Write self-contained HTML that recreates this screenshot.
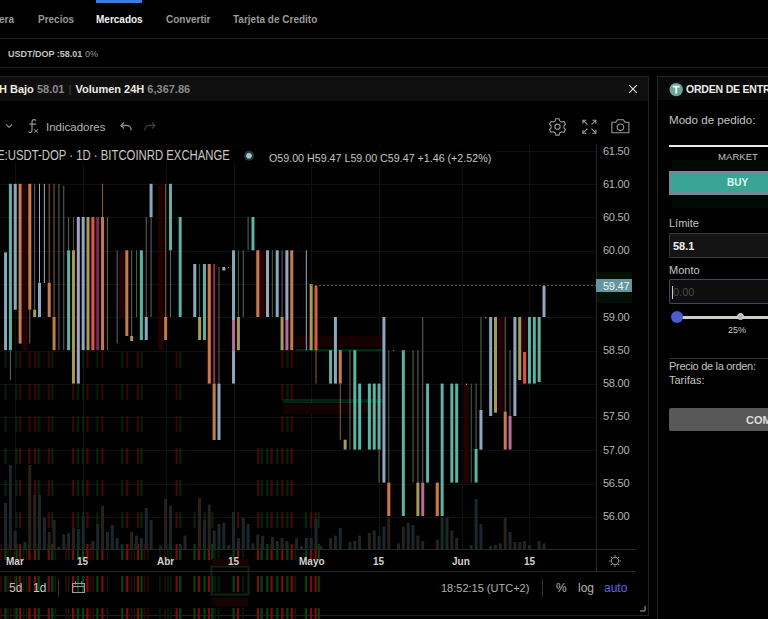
<!DOCTYPE html>
<html><head><meta charset="utf-8">
<style>
*{margin:0;padding:0;box-sizing:border-box}
html,body{width:768px;height:619px;overflow:hidden;background:#000;font-family:"Liberation Sans",sans-serif}
.a{position:absolute;white-space:nowrap}
.nav{font-size:10px;font-weight:bold;color:#9a9a9a;top:14px;line-height:12px}
.pl{font-size:11px;color:#b4b4b4;left:603px;line-height:12px;letter-spacing:-0.25px;font-family:"Liberation Sans",sans-serif}
.tl{font-size:10px;font-weight:bold;color:#d0d0d0;top:556px;line-height:12px}
.rp{font-size:11px;color:#c4c4c4;line-height:13px}
</style></head><body>
<!-- top nav -->
<div class="a" style="left:96px;top:0;width:46px;height:3px;background:#3d7fd8"></div>
<div class="a nav" style="left:-1px">era</div>
<div class="a nav" style="left:38px">Precios</div>
<div class="a nav" style="left:96px;color:#f4f4f4">Mercados</div>
<div class="a nav" style="left:166px">Convertir</div>
<div class="a nav" style="left:233px">Tarjeta de Credito</div>
<div class="a" style="left:0;top:38px;width:768px;height:1px;background:#202020"></div>
<div class="a" style="left:8px;top:48px;font-size:9px;font-weight:bold;color:#c4c4c4;line-height:12px">USDT/DOP :58.01 <span style="color:#9a9a9a;font-weight:normal">0%</span></div>
<div class="a" style="left:0;top:67px;width:768px;height:1px;background:#202020"></div>

<!-- chart panel -->
<div class="a" style="left:-2px;top:76px;width:651px;height:540px;border:1px solid #222;background:#010101"></div>
<div class="a" style="left:0;top:77px;width:648px;height:24px;background:#0f0f0f"></div>
<div class="a" style="left:-1px;top:81px;font-size:11px;font-weight:bold;color:#ecece4;line-height:16px">H Bajo <span style="color:#8a8a8a">58.01</span> <span style="color:#4a4a4a;font-weight:normal;margin:0 1px">|</span> Volumen 24H <span style="color:#8a8a8a">6,367.86</span></div>
<svg class="a" style="left:627px;top:83px" width="12" height="12"><path d="M2.2,2.2 L9.8,9.8 M9.8,2.2 L2.2,9.8" stroke="#d8d8d8" stroke-width="1.2"/></svg>

<svg width="768" height="619" style="position:absolute;left:0;top:0">
<rect x="15" y="144" width="1" height="405" fill="#101010"/>
<rect x="83" y="144" width="1" height="405" fill="#101010"/>
<rect x="166" y="144" width="1" height="405" fill="#101010"/>
<rect x="234" y="144" width="1" height="405" fill="#101010"/>
<rect x="311" y="144" width="1" height="405" fill="#101010"/>
<rect x="379" y="144" width="1" height="405" fill="#101010"/>
<rect x="462" y="144" width="1" height="405" fill="#101010"/>
<rect x="529" y="144" width="1" height="405" fill="#101010"/>
<rect x="0" y="151" width="596" height="1" fill="#101010"/>
<rect x="0" y="184" width="596" height="1" fill="#101010"/>
<rect x="0" y="217" width="596" height="1" fill="#101010"/>
<rect x="0" y="251" width="596" height="1" fill="#101010"/>
<rect x="0" y="284" width="596" height="1" fill="#101010"/>
<rect x="0" y="317" width="596" height="1" fill="#101010"/>
<rect x="0" y="351" width="596" height="1" fill="#101010"/>
<rect x="0" y="384" width="596" height="1" fill="#101010"/>
<rect x="0" y="417" width="596" height="1" fill="#101010"/>
<rect x="0" y="450" width="596" height="1" fill="#101010"/>
<rect x="0" y="484" width="596" height="1" fill="#101010"/>
<rect x="0" y="517" width="596" height="1" fill="#101010"/>
<rect x="296" y="336" width="87" height="11" fill="#160101"/>
<rect x="283" y="404" width="100" height="10" fill="#140101"/>
<rect x="4.40" y="352" width="2.2" height="16" fill="#0a400e" fill-opacity="0.45"/>
<rect x="15.40" y="352" width="2.2" height="16" fill="#0a400e" fill-opacity="0.45"/>
<rect x="18.90" y="352" width="2.2" height="16" fill="#7a0c0c" fill-opacity="0.45"/>
<rect x="28.30" y="352" width="2.2" height="16" fill="#7a0c0c" fill-opacity="0.45"/>
<rect x="33.90" y="352" width="2.2" height="16" fill="#7a0c0c" fill-opacity="0.45"/>
<rect x="37.60" y="352" width="2.2" height="16" fill="#0a400e" fill-opacity="0.45"/>
<rect x="47.60" y="352" width="2.2" height="16" fill="#7a0c0c" fill-opacity="0.45"/>
<rect x="51.20" y="352" width="2.2" height="16" fill="#0a400e" fill-opacity="0.45"/>
<rect x="71.90" y="352" width="2.2" height="16" fill="#7a0c0c" fill-opacity="0.45"/>
<rect x="76.90" y="352" width="2.2" height="16" fill="#0a400e" fill-opacity="0.45"/>
<rect x="81.90" y="352" width="2.2" height="16" fill="#0a400e" fill-opacity="0.45"/>
<rect x="86.30" y="352" width="2.2" height="16" fill="#7a0c0c" fill-opacity="0.45"/>
<rect x="96.30" y="352" width="2.2" height="16" fill="#0a400e" fill-opacity="0.45"/>
<rect x="101.30" y="352" width="2.2" height="16" fill="#7a0c0c" fill-opacity="0.45"/>
<rect x="121.10" y="352" width="2.2" height="16" fill="#0a400e" fill-opacity="0.45"/>
<rect x="126.10" y="352" width="2.2" height="16" fill="#7a0c0c" fill-opacity="0.45"/>
<rect x="136.90" y="352" width="2.2" height="16" fill="#7a0c0c" fill-opacity="0.45"/>
<rect x="140.40" y="352" width="2.2" height="16" fill="#0a400e" fill-opacity="0.45"/>
<rect x="175.50" y="352" width="2.2" height="16" fill="#7a0c0c" fill-opacity="0.45"/>
<rect x="179.10" y="352" width="2.2" height="16" fill="#0a400e" fill-opacity="0.45"/>
<rect x="281.20" y="352" width="2.2" height="16" fill="#7a0c0c" fill-opacity="0.45"/>
<rect x="286.30" y="352" width="2.2" height="16" fill="#0a400e" fill-opacity="0.45"/>
<rect x="290.60" y="352" width="2.2" height="16" fill="#7a0c0c" fill-opacity="0.45"/>
<rect x="4.40" y="384" width="2.2" height="16" fill="#0a400e" fill-opacity="0.45"/>
<rect x="15.40" y="384" width="2.2" height="16" fill="#0a400e" fill-opacity="0.45"/>
<rect x="18.90" y="384" width="2.2" height="16" fill="#7a0c0c" fill-opacity="0.45"/>
<rect x="28.30" y="384" width="2.2" height="16" fill="#7a0c0c" fill-opacity="0.45"/>
<rect x="33.90" y="384" width="2.2" height="16" fill="#7a0c0c" fill-opacity="0.45"/>
<rect x="37.60" y="384" width="2.2" height="16" fill="#0a400e" fill-opacity="0.45"/>
<rect x="47.60" y="384" width="2.2" height="16" fill="#7a0c0c" fill-opacity="0.45"/>
<rect x="51.20" y="384" width="2.2" height="16" fill="#0a400e" fill-opacity="0.45"/>
<rect x="71.90" y="384" width="2.2" height="16" fill="#7a0c0c" fill-opacity="0.45"/>
<rect x="76.90" y="384" width="2.2" height="16" fill="#0a400e" fill-opacity="0.45"/>
<rect x="81.90" y="384" width="2.2" height="16" fill="#0a400e" fill-opacity="0.45"/>
<rect x="86.30" y="384" width="2.2" height="16" fill="#7a0c0c" fill-opacity="0.45"/>
<rect x="96.30" y="384" width="2.2" height="16" fill="#0a400e" fill-opacity="0.45"/>
<rect x="101.30" y="384" width="2.2" height="16" fill="#7a0c0c" fill-opacity="0.45"/>
<rect x="121.10" y="384" width="2.2" height="16" fill="#0a400e" fill-opacity="0.45"/>
<rect x="126.10" y="384" width="2.2" height="16" fill="#7a0c0c" fill-opacity="0.45"/>
<rect x="136.90" y="384" width="2.2" height="16" fill="#7a0c0c" fill-opacity="0.45"/>
<rect x="140.40" y="384" width="2.2" height="16" fill="#0a400e" fill-opacity="0.45"/>
<rect x="175.50" y="384" width="2.2" height="16" fill="#7a0c0c" fill-opacity="0.45"/>
<rect x="179.10" y="384" width="2.2" height="16" fill="#0a400e" fill-opacity="0.45"/>
<rect x="281.20" y="384" width="2.2" height="16" fill="#7a0c0c" fill-opacity="0.45"/>
<rect x="286.30" y="384" width="2.2" height="16" fill="#0a400e" fill-opacity="0.45"/>
<rect x="290.60" y="384" width="2.2" height="16" fill="#7a0c0c" fill-opacity="0.45"/>
<rect x="4.40" y="416" width="2.2" height="16" fill="#0a400e" fill-opacity="0.45"/>
<rect x="15.40" y="416" width="2.2" height="16" fill="#0a400e" fill-opacity="0.45"/>
<rect x="18.90" y="416" width="2.2" height="16" fill="#7a0c0c" fill-opacity="0.45"/>
<rect x="28.30" y="416" width="2.2" height="16" fill="#7a0c0c" fill-opacity="0.45"/>
<rect x="33.90" y="416" width="2.2" height="16" fill="#7a0c0c" fill-opacity="0.45"/>
<rect x="37.60" y="416" width="2.2" height="16" fill="#0a400e" fill-opacity="0.45"/>
<rect x="47.60" y="416" width="2.2" height="16" fill="#7a0c0c" fill-opacity="0.45"/>
<rect x="51.20" y="416" width="2.2" height="16" fill="#0a400e" fill-opacity="0.45"/>
<rect x="71.90" y="416" width="2.2" height="16" fill="#7a0c0c" fill-opacity="0.45"/>
<rect x="76.90" y="416" width="2.2" height="16" fill="#0a400e" fill-opacity="0.45"/>
<rect x="81.90" y="416" width="2.2" height="16" fill="#0a400e" fill-opacity="0.45"/>
<rect x="86.30" y="416" width="2.2" height="16" fill="#7a0c0c" fill-opacity="0.45"/>
<rect x="96.30" y="416" width="2.2" height="16" fill="#0a400e" fill-opacity="0.45"/>
<rect x="101.30" y="416" width="2.2" height="16" fill="#7a0c0c" fill-opacity="0.45"/>
<rect x="121.10" y="416" width="2.2" height="16" fill="#0a400e" fill-opacity="0.45"/>
<rect x="126.10" y="416" width="2.2" height="16" fill="#7a0c0c" fill-opacity="0.45"/>
<rect x="136.90" y="416" width="2.2" height="16" fill="#7a0c0c" fill-opacity="0.45"/>
<rect x="140.40" y="416" width="2.2" height="16" fill="#0a400e" fill-opacity="0.45"/>
<rect x="175.50" y="416" width="2.2" height="16" fill="#7a0c0c" fill-opacity="0.45"/>
<rect x="179.10" y="416" width="2.2" height="16" fill="#0a400e" fill-opacity="0.45"/>
<rect x="281.20" y="416" width="2.2" height="16" fill="#7a0c0c" fill-opacity="0.45"/>
<rect x="286.30" y="416" width="2.2" height="16" fill="#0a400e" fill-opacity="0.45"/>
<rect x="290.60" y="416" width="2.2" height="16" fill="#7a0c0c" fill-opacity="0.45"/>
<rect x="4.40" y="448" width="2.2" height="16" fill="#0a400e" fill-opacity="0.55"/>
<rect x="15.40" y="448" width="2.2" height="16" fill="#0a400e" fill-opacity="0.55"/>
<rect x="18.90" y="448" width="2.2" height="16" fill="#7a0c0c" fill-opacity="0.55"/>
<rect x="28.30" y="448" width="2.2" height="16" fill="#7a0c0c" fill-opacity="0.55"/>
<rect x="33.90" y="448" width="2.2" height="16" fill="#7a0c0c" fill-opacity="0.55"/>
<rect x="37.60" y="448" width="2.2" height="16" fill="#0a400e" fill-opacity="0.55"/>
<rect x="47.60" y="448" width="2.2" height="16" fill="#7a0c0c" fill-opacity="0.55"/>
<rect x="51.20" y="448" width="2.2" height="16" fill="#0a400e" fill-opacity="0.55"/>
<rect x="71.90" y="448" width="2.2" height="16" fill="#7a0c0c" fill-opacity="0.55"/>
<rect x="76.90" y="448" width="2.2" height="16" fill="#0a400e" fill-opacity="0.55"/>
<rect x="81.90" y="448" width="2.2" height="16" fill="#0a400e" fill-opacity="0.55"/>
<rect x="86.30" y="448" width="2.2" height="16" fill="#7a0c0c" fill-opacity="0.55"/>
<rect x="96.30" y="448" width="2.2" height="16" fill="#0a400e" fill-opacity="0.55"/>
<rect x="101.30" y="448" width="2.2" height="16" fill="#7a0c0c" fill-opacity="0.55"/>
<rect x="121.10" y="448" width="2.2" height="16" fill="#0a400e" fill-opacity="0.55"/>
<rect x="126.10" y="448" width="2.2" height="16" fill="#7a0c0c" fill-opacity="0.55"/>
<rect x="136.90" y="448" width="2.2" height="16" fill="#7a0c0c" fill-opacity="0.55"/>
<rect x="140.40" y="448" width="2.2" height="16" fill="#0a400e" fill-opacity="0.55"/>
<rect x="175.50" y="448" width="2.2" height="16" fill="#7a0c0c" fill-opacity="0.55"/>
<rect x="179.10" y="448" width="2.2" height="16" fill="#0a400e" fill-opacity="0.55"/>
<rect x="256.90" y="448" width="2.2" height="16" fill="#7a0c0c" fill-opacity="0.55"/>
<rect x="260.50" y="448" width="2.2" height="16" fill="#0a400e" fill-opacity="0.55"/>
<rect x="266.20" y="448" width="2.2" height="16" fill="#0a400e" fill-opacity="0.55"/>
<rect x="270.50" y="448" width="2.2" height="16" fill="#7a0c0c" fill-opacity="0.55"/>
<rect x="276.20" y="448" width="2.2" height="16" fill="#0a400e" fill-opacity="0.55"/>
<rect x="281.20" y="448" width="2.2" height="16" fill="#7a0c0c" fill-opacity="0.55"/>
<rect x="286.30" y="448" width="2.2" height="16" fill="#0a400e" fill-opacity="0.55"/>
<rect x="290.60" y="448" width="2.2" height="16" fill="#7a0c0c" fill-opacity="0.55"/>
<rect x="4.40" y="480" width="2.2" height="16" fill="#0a400e" fill-opacity="0.55"/>
<rect x="15.40" y="480" width="2.2" height="16" fill="#0a400e" fill-opacity="0.55"/>
<rect x="18.90" y="480" width="2.2" height="16" fill="#7a0c0c" fill-opacity="0.55"/>
<rect x="28.30" y="480" width="2.2" height="16" fill="#7a0c0c" fill-opacity="0.55"/>
<rect x="33.90" y="480" width="2.2" height="16" fill="#7a0c0c" fill-opacity="0.55"/>
<rect x="37.60" y="480" width="2.2" height="16" fill="#0a400e" fill-opacity="0.55"/>
<rect x="47.60" y="480" width="2.2" height="16" fill="#7a0c0c" fill-opacity="0.55"/>
<rect x="51.20" y="480" width="2.2" height="16" fill="#0a400e" fill-opacity="0.55"/>
<rect x="71.90" y="480" width="2.2" height="16" fill="#7a0c0c" fill-opacity="0.55"/>
<rect x="76.90" y="480" width="2.2" height="16" fill="#0a400e" fill-opacity="0.55"/>
<rect x="81.90" y="480" width="2.2" height="16" fill="#0a400e" fill-opacity="0.55"/>
<rect x="86.30" y="480" width="2.2" height="16" fill="#7a0c0c" fill-opacity="0.55"/>
<rect x="96.30" y="480" width="2.2" height="16" fill="#0a400e" fill-opacity="0.55"/>
<rect x="101.30" y="480" width="2.2" height="16" fill="#7a0c0c" fill-opacity="0.55"/>
<rect x="121.10" y="480" width="2.2" height="16" fill="#0a400e" fill-opacity="0.55"/>
<rect x="126.10" y="480" width="2.2" height="16" fill="#7a0c0c" fill-opacity="0.55"/>
<rect x="136.90" y="480" width="2.2" height="16" fill="#7a0c0c" fill-opacity="0.55"/>
<rect x="140.40" y="480" width="2.2" height="16" fill="#0a400e" fill-opacity="0.55"/>
<rect x="175.50" y="480" width="2.2" height="16" fill="#7a0c0c" fill-opacity="0.55"/>
<rect x="179.10" y="480" width="2.2" height="16" fill="#0a400e" fill-opacity="0.55"/>
<rect x="256.90" y="480" width="2.2" height="16" fill="#7a0c0c" fill-opacity="0.55"/>
<rect x="260.50" y="480" width="2.2" height="16" fill="#0a400e" fill-opacity="0.55"/>
<rect x="266.20" y="480" width="2.2" height="16" fill="#0a400e" fill-opacity="0.55"/>
<rect x="270.50" y="480" width="2.2" height="16" fill="#7a0c0c" fill-opacity="0.55"/>
<rect x="276.20" y="480" width="2.2" height="16" fill="#0a400e" fill-opacity="0.55"/>
<rect x="281.20" y="480" width="2.2" height="16" fill="#7a0c0c" fill-opacity="0.55"/>
<rect x="286.30" y="480" width="2.2" height="16" fill="#0a400e" fill-opacity="0.55"/>
<rect x="290.60" y="480" width="2.2" height="16" fill="#7a0c0c" fill-opacity="0.55"/>
<rect x="4.40" y="512" width="2.2" height="16" fill="#0a400e" fill-opacity="0.55"/>
<rect x="15.40" y="512" width="2.2" height="16" fill="#0a400e" fill-opacity="0.55"/>
<rect x="18.90" y="512" width="2.2" height="16" fill="#7a0c0c" fill-opacity="0.55"/>
<rect x="28.30" y="512" width="2.2" height="16" fill="#7a0c0c" fill-opacity="0.55"/>
<rect x="33.90" y="512" width="2.2" height="16" fill="#7a0c0c" fill-opacity="0.55"/>
<rect x="37.60" y="512" width="2.2" height="16" fill="#0a400e" fill-opacity="0.55"/>
<rect x="47.60" y="512" width="2.2" height="16" fill="#7a0c0c" fill-opacity="0.55"/>
<rect x="51.20" y="512" width="2.2" height="16" fill="#0a400e" fill-opacity="0.55"/>
<rect x="71.90" y="512" width="2.2" height="16" fill="#7a0c0c" fill-opacity="0.55"/>
<rect x="76.90" y="512" width="2.2" height="16" fill="#0a400e" fill-opacity="0.55"/>
<rect x="81.90" y="512" width="2.2" height="16" fill="#0a400e" fill-opacity="0.55"/>
<rect x="86.30" y="512" width="2.2" height="16" fill="#7a0c0c" fill-opacity="0.55"/>
<rect x="96.30" y="512" width="2.2" height="16" fill="#0a400e" fill-opacity="0.55"/>
<rect x="101.30" y="512" width="2.2" height="16" fill="#7a0c0c" fill-opacity="0.55"/>
<rect x="121.10" y="512" width="2.2" height="16" fill="#0a400e" fill-opacity="0.55"/>
<rect x="126.10" y="512" width="2.2" height="16" fill="#7a0c0c" fill-opacity="0.55"/>
<rect x="136.90" y="512" width="2.2" height="16" fill="#7a0c0c" fill-opacity="0.55"/>
<rect x="140.40" y="512" width="2.2" height="16" fill="#0a400e" fill-opacity="0.55"/>
<rect x="175.50" y="512" width="2.2" height="16" fill="#7a0c0c" fill-opacity="0.55"/>
<rect x="179.10" y="512" width="2.2" height="16" fill="#0a400e" fill-opacity="0.55"/>
<rect x="193.40" y="512" width="2.2" height="16" fill="#0a400e" fill-opacity="0.55"/>
<rect x="197.70" y="512" width="2.2" height="16" fill="#7a0c0c" fill-opacity="0.55"/>
<rect x="203.50" y="512" width="2.2" height="16" fill="#0a400e" fill-opacity="0.55"/>
<rect x="207.80" y="512" width="2.2" height="16" fill="#7a0c0c" fill-opacity="0.55"/>
<rect x="211.30" y="512" width="2.2" height="16" fill="#0a400e" fill-opacity="0.55"/>
<rect x="232.50" y="512" width="2.2" height="16" fill="#0a400e" fill-opacity="0.55"/>
<rect x="236.90" y="512" width="2.2" height="16" fill="#7a0c0c" fill-opacity="0.55"/>
<rect x="256.90" y="512" width="2.2" height="16" fill="#7a0c0c" fill-opacity="0.55"/>
<rect x="260.50" y="512" width="2.2" height="16" fill="#0a400e" fill-opacity="0.55"/>
<rect x="266.20" y="512" width="2.2" height="16" fill="#0a400e" fill-opacity="0.55"/>
<rect x="270.50" y="512" width="2.2" height="16" fill="#7a0c0c" fill-opacity="0.55"/>
<rect x="276.20" y="512" width="2.2" height="16" fill="#0a400e" fill-opacity="0.55"/>
<rect x="281.20" y="512" width="2.2" height="16" fill="#7a0c0c" fill-opacity="0.55"/>
<rect x="286.30" y="512" width="2.2" height="16" fill="#0a400e" fill-opacity="0.55"/>
<rect x="290.60" y="512" width="2.2" height="16" fill="#7a0c0c" fill-opacity="0.55"/>
<rect x="304.90" y="512" width="2.2" height="16" fill="#0a400e" fill-opacity="0.55"/>
<rect x="309.90" y="512" width="2.2" height="16" fill="#7a0c0c" fill-opacity="0.55"/>
<rect x="314.50" y="512" width="2.2" height="16" fill="#7a0c0c" fill-opacity="0.55"/>
<rect x="317.65" y="512" width="2.2" height="16" fill="#0a400e" fill-opacity="0.55"/>
<rect x="0.20" y="544" width="1.6" height="16" fill="#360606" fill-opacity="1.0"/>
<rect x="4.40" y="544" width="2.2" height="16" fill="#0a400e" fill-opacity="1.0"/>
<rect x="7.20" y="544" width="1.6" height="16" fill="#360606" fill-opacity="1.0"/>
<rect x="9.90" y="544" width="1.6" height="16" fill="#052005" fill-opacity="1.0"/>
<rect x="13.50" y="544" width="1.6" height="16" fill="#360606" fill-opacity="1.0"/>
<rect x="15.40" y="544" width="2.2" height="16" fill="#0a400e" fill-opacity="1.0"/>
<rect x="18.90" y="544" width="2.2" height="16" fill="#7a0c0c" fill-opacity="1.0"/>
<rect x="22.80" y="544" width="1.6" height="16" fill="#052005" fill-opacity="1.0"/>
<rect x="25.70" y="544" width="1.6" height="16" fill="#052005" fill-opacity="1.0"/>
<rect x="28.30" y="544" width="2.2" height="16" fill="#7a0c0c" fill-opacity="1.0"/>
<rect x="33.90" y="544" width="2.2" height="16" fill="#7a0c0c" fill-opacity="1.0"/>
<rect x="37.60" y="544" width="2.2" height="16" fill="#0a400e" fill-opacity="1.0"/>
<rect x="47.60" y="544" width="2.2" height="16" fill="#7a0c0c" fill-opacity="1.0"/>
<rect x="51.20" y="544" width="2.2" height="16" fill="#0a400e" fill-opacity="1.0"/>
<rect x="54.20" y="544" width="1.6" height="16" fill="#052005" fill-opacity="1.0"/>
<rect x="65.20" y="544" width="1.6" height="16" fill="#360606" fill-opacity="1.0"/>
<rect x="68.00" y="544" width="1.6" height="16" fill="#052005" fill-opacity="1.0"/>
<rect x="71.90" y="544" width="2.2" height="16" fill="#7a0c0c" fill-opacity="1.0"/>
<rect x="76.90" y="544" width="2.2" height="16" fill="#0a400e" fill-opacity="1.0"/>
<rect x="81.90" y="544" width="2.2" height="16" fill="#0a400e" fill-opacity="1.0"/>
<rect x="86.30" y="544" width="2.2" height="16" fill="#7a0c0c" fill-opacity="1.0"/>
<rect x="89.50" y="544" width="1.6" height="16" fill="#360606" fill-opacity="1.0"/>
<rect x="92.20" y="544" width="1.6" height="16" fill="#360606" fill-opacity="1.0"/>
<rect x="96.30" y="544" width="2.2" height="16" fill="#0a400e" fill-opacity="1.0"/>
<rect x="101.30" y="544" width="2.2" height="16" fill="#7a0c0c" fill-opacity="1.0"/>
<rect x="106.60" y="544" width="1.6" height="16" fill="#052005" fill-opacity="1.0"/>
<rect x="121.10" y="544" width="2.2" height="16" fill="#0a400e" fill-opacity="1.0"/>
<rect x="126.10" y="544" width="2.2" height="16" fill="#7a0c0c" fill-opacity="1.0"/>
<rect x="130.70" y="544" width="1.6" height="16" fill="#360606" fill-opacity="1.0"/>
<rect x="133.60" y="544" width="1.6" height="16" fill="#052005" fill-opacity="1.0"/>
<rect x="136.90" y="544" width="2.2" height="16" fill="#7a0c0c" fill-opacity="1.0"/>
<rect x="140.40" y="544" width="2.2" height="16" fill="#0a400e" fill-opacity="1.0"/>
<rect x="143.60" y="544" width="1.6" height="16" fill="#360606" fill-opacity="1.0"/>
<rect x="147.20" y="544" width="1.6" height="16" fill="#360606" fill-opacity="1.0"/>
<rect x="159.20" y="544" width="1.6" height="16" fill="#052005" fill-opacity="1.0"/>
<rect x="164.20" y="544" width="1.6" height="16" fill="#360606" fill-opacity="1.0"/>
<rect x="167.20" y="544" width="1.6" height="16" fill="#052005" fill-opacity="1.0"/>
<rect x="170.20" y="544" width="1.6" height="16" fill="#052005" fill-opacity="1.0"/>
<rect x="175.50" y="544" width="2.2" height="16" fill="#7a0c0c" fill-opacity="1.0"/>
<rect x="179.10" y="544" width="2.2" height="16" fill="#0a400e" fill-opacity="1.0"/>
<rect x="193.40" y="544" width="2.2" height="16" fill="#0a400e" fill-opacity="1.0"/>
<rect x="197.70" y="544" width="2.2" height="16" fill="#7a0c0c" fill-opacity="1.0"/>
<rect x="203.50" y="544" width="2.2" height="16" fill="#0a400e" fill-opacity="1.0"/>
<rect x="207.80" y="544" width="2.2" height="16" fill="#7a0c0c" fill-opacity="1.0"/>
<rect x="211.30" y="544" width="2.2" height="16" fill="#0a400e" fill-opacity="1.0"/>
<rect x="214.20" y="544" width="1.6" height="16" fill="#052005" fill-opacity="1.0"/>
<rect x="217.80" y="544" width="1.6" height="16" fill="#052005" fill-opacity="1.0"/>
<rect x="232.50" y="544" width="2.2" height="16" fill="#0a400e" fill-opacity="1.0"/>
<rect x="236.90" y="544" width="2.2" height="16" fill="#7a0c0c" fill-opacity="1.0"/>
<rect x="242.20" y="544" width="1.6" height="16" fill="#052005" fill-opacity="1.0"/>
<rect x="256.90" y="544" width="2.2" height="16" fill="#7a0c0c" fill-opacity="1.0"/>
<rect x="260.50" y="544" width="2.2" height="16" fill="#0a400e" fill-opacity="1.0"/>
<rect x="266.20" y="544" width="2.2" height="16" fill="#0a400e" fill-opacity="1.0"/>
<rect x="270.50" y="544" width="2.2" height="16" fill="#7a0c0c" fill-opacity="1.0"/>
<rect x="276.20" y="544" width="2.2" height="16" fill="#0a400e" fill-opacity="1.0"/>
<rect x="281.20" y="544" width="2.2" height="16" fill="#7a0c0c" fill-opacity="1.0"/>
<rect x="286.30" y="544" width="2.2" height="16" fill="#0a400e" fill-opacity="1.0"/>
<rect x="290.60" y="544" width="2.2" height="16" fill="#7a0c0c" fill-opacity="1.0"/>
<rect x="294.40" y="544" width="1.6" height="16" fill="#052005" fill-opacity="1.0"/>
<rect x="304.90" y="544" width="2.2" height="16" fill="#0a400e" fill-opacity="1.0"/>
<rect x="309.90" y="544" width="2.2" height="16" fill="#7a0c0c" fill-opacity="1.0"/>
<rect x="314.50" y="544" width="2.2" height="16" fill="#7a0c0c" fill-opacity="1.0"/>
<rect x="317.65" y="544" width="2.2" height="16" fill="#0a400e" fill-opacity="1.0"/>
<rect x="0.20" y="576" width="1.6" height="16" fill="#360606" fill-opacity="1.0"/>
<rect x="4.40" y="576" width="2.2" height="16" fill="#0a400e" fill-opacity="1.0"/>
<rect x="7.20" y="576" width="1.6" height="16" fill="#360606" fill-opacity="1.0"/>
<rect x="9.90" y="576" width="1.6" height="16" fill="#052005" fill-opacity="1.0"/>
<rect x="13.50" y="576" width="1.6" height="16" fill="#360606" fill-opacity="1.0"/>
<rect x="15.40" y="576" width="2.2" height="16" fill="#0a400e" fill-opacity="1.0"/>
<rect x="18.90" y="576" width="2.2" height="16" fill="#7a0c0c" fill-opacity="1.0"/>
<rect x="22.80" y="576" width="1.6" height="16" fill="#052005" fill-opacity="1.0"/>
<rect x="25.70" y="576" width="1.6" height="16" fill="#052005" fill-opacity="1.0"/>
<rect x="28.30" y="576" width="2.2" height="16" fill="#7a0c0c" fill-opacity="1.0"/>
<rect x="33.90" y="576" width="2.2" height="16" fill="#7a0c0c" fill-opacity="1.0"/>
<rect x="37.60" y="576" width="2.2" height="16" fill="#0a400e" fill-opacity="1.0"/>
<rect x="47.60" y="576" width="2.2" height="16" fill="#7a0c0c" fill-opacity="1.0"/>
<rect x="51.20" y="576" width="2.2" height="16" fill="#0a400e" fill-opacity="1.0"/>
<rect x="54.20" y="576" width="1.6" height="16" fill="#052005" fill-opacity="1.0"/>
<rect x="65.20" y="576" width="1.6" height="16" fill="#360606" fill-opacity="1.0"/>
<rect x="68.00" y="576" width="1.6" height="16" fill="#052005" fill-opacity="1.0"/>
<rect x="71.90" y="576" width="2.2" height="16" fill="#7a0c0c" fill-opacity="1.0"/>
<rect x="76.90" y="576" width="2.2" height="16" fill="#0a400e" fill-opacity="1.0"/>
<rect x="81.90" y="576" width="2.2" height="16" fill="#0a400e" fill-opacity="1.0"/>
<rect x="86.30" y="576" width="2.2" height="16" fill="#7a0c0c" fill-opacity="1.0"/>
<rect x="89.50" y="576" width="1.6" height="16" fill="#360606" fill-opacity="1.0"/>
<rect x="92.20" y="576" width="1.6" height="16" fill="#360606" fill-opacity="1.0"/>
<rect x="96.30" y="576" width="2.2" height="16" fill="#0a400e" fill-opacity="1.0"/>
<rect x="101.30" y="576" width="2.2" height="16" fill="#7a0c0c" fill-opacity="1.0"/>
<rect x="106.60" y="576" width="1.6" height="16" fill="#052005" fill-opacity="1.0"/>
<rect x="121.10" y="576" width="2.2" height="16" fill="#0a400e" fill-opacity="1.0"/>
<rect x="126.10" y="576" width="2.2" height="16" fill="#7a0c0c" fill-opacity="1.0"/>
<rect x="130.70" y="576" width="1.6" height="16" fill="#360606" fill-opacity="1.0"/>
<rect x="133.60" y="576" width="1.6" height="16" fill="#052005" fill-opacity="1.0"/>
<rect x="136.90" y="576" width="2.2" height="16" fill="#7a0c0c" fill-opacity="1.0"/>
<rect x="140.40" y="576" width="2.2" height="16" fill="#0a400e" fill-opacity="1.0"/>
<rect x="143.60" y="576" width="1.6" height="16" fill="#360606" fill-opacity="1.0"/>
<rect x="147.20" y="576" width="1.6" height="16" fill="#360606" fill-opacity="1.0"/>
<rect x="159.20" y="576" width="1.6" height="16" fill="#052005" fill-opacity="1.0"/>
<rect x="164.20" y="576" width="1.6" height="16" fill="#360606" fill-opacity="1.0"/>
<rect x="167.20" y="576" width="1.6" height="16" fill="#052005" fill-opacity="1.0"/>
<rect x="170.20" y="576" width="1.6" height="16" fill="#052005" fill-opacity="1.0"/>
<rect x="175.50" y="576" width="2.2" height="16" fill="#7a0c0c" fill-opacity="1.0"/>
<rect x="179.10" y="576" width="2.2" height="16" fill="#0a400e" fill-opacity="1.0"/>
<rect x="193.40" y="576" width="2.2" height="16" fill="#0a400e" fill-opacity="1.0"/>
<rect x="197.70" y="576" width="2.2" height="16" fill="#7a0c0c" fill-opacity="1.0"/>
<rect x="203.50" y="576" width="2.2" height="16" fill="#0a400e" fill-opacity="1.0"/>
<rect x="207.80" y="576" width="2.2" height="16" fill="#7a0c0c" fill-opacity="1.0"/>
<rect x="211.30" y="576" width="2.2" height="16" fill="#0a400e" fill-opacity="1.0"/>
<rect x="214.20" y="576" width="1.6" height="16" fill="#052005" fill-opacity="1.0"/>
<rect x="217.80" y="576" width="1.6" height="16" fill="#052005" fill-opacity="1.0"/>
<rect x="232.50" y="576" width="2.2" height="16" fill="#0a400e" fill-opacity="1.0"/>
<rect x="236.90" y="576" width="2.2" height="16" fill="#7a0c0c" fill-opacity="1.0"/>
<rect x="242.20" y="576" width="1.6" height="16" fill="#052005" fill-opacity="1.0"/>
<rect x="256.90" y="576" width="2.2" height="16" fill="#7a0c0c" fill-opacity="1.0"/>
<rect x="260.50" y="576" width="2.2" height="16" fill="#0a400e" fill-opacity="1.0"/>
<rect x="266.20" y="576" width="2.2" height="16" fill="#0a400e" fill-opacity="1.0"/>
<rect x="270.50" y="576" width="2.2" height="16" fill="#7a0c0c" fill-opacity="1.0"/>
<rect x="276.20" y="576" width="2.2" height="16" fill="#0a400e" fill-opacity="1.0"/>
<rect x="281.20" y="576" width="2.2" height="16" fill="#7a0c0c" fill-opacity="1.0"/>
<rect x="286.30" y="576" width="2.2" height="16" fill="#0a400e" fill-opacity="1.0"/>
<rect x="290.60" y="576" width="2.2" height="16" fill="#7a0c0c" fill-opacity="1.0"/>
<rect x="294.40" y="576" width="1.6" height="16" fill="#052005" fill-opacity="1.0"/>
<rect x="304.90" y="576" width="2.2" height="16" fill="#0a400e" fill-opacity="1.0"/>
<rect x="309.90" y="576" width="2.2" height="16" fill="#7a0c0c" fill-opacity="1.0"/>
<rect x="314.50" y="576" width="2.2" height="16" fill="#7a0c0c" fill-opacity="1.0"/>
<rect x="317.65" y="576" width="2.2" height="16" fill="#0a400e" fill-opacity="1.0"/>
<rect x="0.20" y="608" width="1.6" height="16" fill="#360606" fill-opacity="1.0"/>
<rect x="4.40" y="608" width="2.2" height="16" fill="#0a400e" fill-opacity="1.0"/>
<rect x="7.20" y="608" width="1.6" height="16" fill="#360606" fill-opacity="1.0"/>
<rect x="9.90" y="608" width="1.6" height="16" fill="#052005" fill-opacity="1.0"/>
<rect x="13.50" y="608" width="1.6" height="16" fill="#360606" fill-opacity="1.0"/>
<rect x="15.40" y="608" width="2.2" height="16" fill="#0a400e" fill-opacity="1.0"/>
<rect x="18.90" y="608" width="2.2" height="16" fill="#7a0c0c" fill-opacity="1.0"/>
<rect x="22.80" y="608" width="1.6" height="16" fill="#052005" fill-opacity="1.0"/>
<rect x="25.70" y="608" width="1.6" height="16" fill="#052005" fill-opacity="1.0"/>
<rect x="28.30" y="608" width="2.2" height="16" fill="#7a0c0c" fill-opacity="1.0"/>
<rect x="33.90" y="608" width="2.2" height="16" fill="#7a0c0c" fill-opacity="1.0"/>
<rect x="37.60" y="608" width="2.2" height="16" fill="#0a400e" fill-opacity="1.0"/>
<rect x="47.60" y="608" width="2.2" height="16" fill="#7a0c0c" fill-opacity="1.0"/>
<rect x="51.20" y="608" width="2.2" height="16" fill="#0a400e" fill-opacity="1.0"/>
<rect x="54.20" y="608" width="1.6" height="16" fill="#052005" fill-opacity="1.0"/>
<rect x="65.20" y="608" width="1.6" height="16" fill="#360606" fill-opacity="1.0"/>
<rect x="68.00" y="608" width="1.6" height="16" fill="#052005" fill-opacity="1.0"/>
<rect x="71.90" y="608" width="2.2" height="16" fill="#7a0c0c" fill-opacity="1.0"/>
<rect x="76.90" y="608" width="2.2" height="16" fill="#0a400e" fill-opacity="1.0"/>
<rect x="81.90" y="608" width="2.2" height="16" fill="#0a400e" fill-opacity="1.0"/>
<rect x="86.30" y="608" width="2.2" height="16" fill="#7a0c0c" fill-opacity="1.0"/>
<rect x="89.50" y="608" width="1.6" height="16" fill="#360606" fill-opacity="1.0"/>
<rect x="92.20" y="608" width="1.6" height="16" fill="#360606" fill-opacity="1.0"/>
<rect x="96.30" y="608" width="2.2" height="16" fill="#0a400e" fill-opacity="1.0"/>
<rect x="101.30" y="608" width="2.2" height="16" fill="#7a0c0c" fill-opacity="1.0"/>
<rect x="106.60" y="608" width="1.6" height="16" fill="#052005" fill-opacity="1.0"/>
<rect x="121.10" y="608" width="2.2" height="16" fill="#0a400e" fill-opacity="1.0"/>
<rect x="126.10" y="608" width="2.2" height="16" fill="#7a0c0c" fill-opacity="1.0"/>
<rect x="130.70" y="608" width="1.6" height="16" fill="#360606" fill-opacity="1.0"/>
<rect x="133.60" y="608" width="1.6" height="16" fill="#052005" fill-opacity="1.0"/>
<rect x="136.90" y="608" width="2.2" height="16" fill="#7a0c0c" fill-opacity="1.0"/>
<rect x="140.40" y="608" width="2.2" height="16" fill="#0a400e" fill-opacity="1.0"/>
<rect x="143.60" y="608" width="1.6" height="16" fill="#360606" fill-opacity="1.0"/>
<rect x="147.20" y="608" width="1.6" height="16" fill="#360606" fill-opacity="1.0"/>
<rect x="159.20" y="608" width="1.6" height="16" fill="#052005" fill-opacity="1.0"/>
<rect x="164.20" y="608" width="1.6" height="16" fill="#360606" fill-opacity="1.0"/>
<rect x="167.20" y="608" width="1.6" height="16" fill="#052005" fill-opacity="1.0"/>
<rect x="170.20" y="608" width="1.6" height="16" fill="#052005" fill-opacity="1.0"/>
<rect x="175.50" y="608" width="2.2" height="16" fill="#7a0c0c" fill-opacity="1.0"/>
<rect x="179.10" y="608" width="2.2" height="16" fill="#0a400e" fill-opacity="1.0"/>
<rect x="193.40" y="608" width="2.2" height="16" fill="#0a400e" fill-opacity="1.0"/>
<rect x="197.70" y="608" width="2.2" height="16" fill="#7a0c0c" fill-opacity="1.0"/>
<rect x="203.50" y="608" width="2.2" height="16" fill="#0a400e" fill-opacity="1.0"/>
<rect x="207.80" y="608" width="2.2" height="16" fill="#7a0c0c" fill-opacity="1.0"/>
<rect x="211.30" y="608" width="2.2" height="16" fill="#0a400e" fill-opacity="1.0"/>
<rect x="214.20" y="608" width="1.6" height="16" fill="#052005" fill-opacity="1.0"/>
<rect x="217.80" y="608" width="1.6" height="16" fill="#052005" fill-opacity="1.0"/>
<rect x="232.50" y="608" width="2.2" height="16" fill="#0a400e" fill-opacity="1.0"/>
<rect x="236.90" y="608" width="2.2" height="16" fill="#7a0c0c" fill-opacity="1.0"/>
<rect x="242.20" y="608" width="1.6" height="16" fill="#052005" fill-opacity="1.0"/>
<rect x="256.90" y="608" width="2.2" height="16" fill="#7a0c0c" fill-opacity="1.0"/>
<rect x="260.50" y="608" width="2.2" height="16" fill="#0a400e" fill-opacity="1.0"/>
<rect x="266.20" y="608" width="2.2" height="16" fill="#0a400e" fill-opacity="1.0"/>
<rect x="270.50" y="608" width="2.2" height="16" fill="#7a0c0c" fill-opacity="1.0"/>
<rect x="276.20" y="608" width="2.2" height="16" fill="#0a400e" fill-opacity="1.0"/>
<rect x="281.20" y="608" width="2.2" height="16" fill="#7a0c0c" fill-opacity="1.0"/>
<rect x="286.30" y="608" width="2.2" height="16" fill="#0a400e" fill-opacity="1.0"/>
<rect x="290.60" y="608" width="2.2" height="16" fill="#7a0c0c" fill-opacity="1.0"/>
<rect x="294.40" y="608" width="1.6" height="16" fill="#052005" fill-opacity="1.0"/>
<rect x="304.90" y="608" width="2.2" height="16" fill="#0a400e" fill-opacity="1.0"/>
<rect x="309.90" y="608" width="2.2" height="16" fill="#7a0c0c" fill-opacity="1.0"/>
<rect x="314.50" y="608" width="2.2" height="16" fill="#7a0c0c" fill-opacity="1.0"/>
<rect x="317.65" y="608" width="2.2" height="16" fill="#0a400e" fill-opacity="1.0"/>
<rect x="4.05" y="503.0" width="3" height="46.0" fill="#1c272c"/>
<rect x="8.90" y="465.0" width="3" height="84.0" fill="#1c272c"/>
<rect x="13.75" y="530.5" width="3" height="18.5" fill="#1c272c"/>
<rect x="23.45" y="542.0" width="3" height="7.0" fill="#162c2c"/>
<rect x="28.30" y="465.0" width="3" height="84.0" fill="#29211b"/>
<rect x="33.15" y="495.0" width="3" height="54.0" fill="#29211b"/>
<rect x="38.00" y="495.0" width="3" height="54.0" fill="#1c272c"/>
<rect x="42.86" y="517.5" width="3" height="31.5" fill="#1c272c"/>
<rect x="47.71" y="531.8" width="3" height="17.2" fill="#29211b"/>
<rect x="52.56" y="520.0" width="3" height="29.0" fill="#29211b"/>
<rect x="57.41" y="547.0" width="3" height="2.0" fill="#1c272c"/>
<rect x="62.26" y="534.4" width="3" height="14.6" fill="#1c272c"/>
<rect x="67.11" y="533.0" width="3" height="16.0" fill="#1c272c"/>
<rect x="71.96" y="528.0" width="3" height="21.0" fill="#29211b"/>
<rect x="76.81" y="529.0" width="3" height="20.0" fill="#1c272c"/>
<rect x="81.66" y="516.0" width="3" height="33.0" fill="#1c272c"/>
<rect x="91.37" y="541.0" width="3" height="8.0" fill="#1c272c"/>
<rect x="96.22" y="524.0" width="3" height="25.0" fill="#1c272c"/>
<rect x="101.07" y="505.8" width="3" height="43.2" fill="#29211b"/>
<rect x="105.92" y="531.8" width="3" height="17.2" fill="#1c272c"/>
<rect x="110.77" y="525.0" width="3" height="24.0" fill="#1c272c"/>
<rect x="115.62" y="538.0" width="3" height="11.0" fill="#1c272c"/>
<rect x="120.47" y="544.8" width="3" height="4.2" fill="#162c2c"/>
<rect x="130.17" y="531.8" width="3" height="17.2" fill="#29211b"/>
<rect x="135.03" y="535.7" width="3" height="13.3" fill="#1c272c"/>
<rect x="139.88" y="538.0" width="3" height="11.0" fill="#1c272c"/>
<rect x="144.73" y="508.0" width="3" height="41.0" fill="#1c272c"/>
<rect x="149.58" y="520.0" width="3" height="29.0" fill="#1c272c"/>
<rect x="159.28" y="546.0" width="3" height="3.0" fill="#1c272c"/>
<rect x="164.13" y="499.0" width="3" height="50.0" fill="#29211b"/>
<rect x="168.98" y="505.8" width="3" height="43.2" fill="#1c272c"/>
<rect x="178.68" y="545.0" width="3" height="4.0" fill="#1c272c"/>
<rect x="183.53" y="535.7" width="3" height="13.3" fill="#1c272c"/>
<rect x="198.09" y="498.0" width="3" height="51.0" fill="#29211b"/>
<rect x="202.94" y="520.0" width="3" height="29.0" fill="#1c272c"/>
<rect x="207.79" y="504.5" width="3" height="44.5" fill="#29211b"/>
<rect x="212.64" y="530.5" width="3" height="18.5" fill="#1c272c"/>
<rect x="217.49" y="524.0" width="3" height="25.0" fill="#1c272c"/>
<rect x="222.34" y="522.7" width="3" height="26.3" fill="#1c272c"/>
<rect x="227.19" y="545.0" width="3" height="4.0" fill="#1c272c"/>
<rect x="232.04" y="512.0" width="3" height="37.0" fill="#1c272c"/>
<rect x="236.90" y="538.0" width="3" height="11.0" fill="#1c272c"/>
<rect x="241.75" y="517.5" width="3" height="31.5" fill="#1c272c"/>
<rect x="246.60" y="524.0" width="3" height="25.0" fill="#1c272c"/>
<rect x="251.45" y="543.5" width="3" height="5.5" fill="#1c272c"/>
<rect x="256.30" y="534.4" width="3" height="14.6" fill="#29211b"/>
<rect x="261.15" y="535.7" width="3" height="13.3" fill="#1c272c"/>
<rect x="270.85" y="537.0" width="3" height="12.0" fill="#1c272c"/>
<rect x="275.70" y="541.0" width="3" height="8.0" fill="#1c272c"/>
<rect x="280.56" y="538.0" width="3" height="11.0" fill="#29211b"/>
<rect x="285.41" y="541.0" width="3" height="8.0" fill="#1c272c"/>
<rect x="295.11" y="538.0" width="3" height="11.0" fill="#29211b"/>
<rect x="299.96" y="546.0" width="3" height="3.0" fill="#1c272c"/>
<rect x="304.81" y="538.0" width="3" height="11.0" fill="#1c272c"/>
<rect x="309.66" y="538.0" width="3" height="11.0" fill="#1c272c"/>
<rect x="314.51" y="518.8" width="3" height="30.2" fill="#1c272c"/>
<rect x="319.36" y="546.0" width="3" height="3.0" fill="#1c272c"/>
<rect x="329.06" y="538.0" width="3" height="11.0" fill="#29211b"/>
<rect x="333.92" y="535.7" width="3" height="13.3" fill="#1c272c"/>
<rect x="338.77" y="528.0" width="3" height="21.0" fill="#1c272c"/>
<rect x="348.47" y="542.0" width="3" height="7.0" fill="#1c272c"/>
<rect x="353.32" y="541.0" width="3" height="8.0" fill="#1c272c"/>
<rect x="358.17" y="535.7" width="3" height="13.3" fill="#1c272c"/>
<rect x="367.87" y="533.0" width="3" height="16.0" fill="#29211b"/>
<rect x="372.72" y="530.5" width="3" height="18.5" fill="#1c272c"/>
<rect x="377.57" y="535.7" width="3" height="13.3" fill="#1c272c"/>
<rect x="382.43" y="526.6" width="3" height="22.4" fill="#1c272c"/>
<rect x="387.28" y="517.5" width="3" height="31.5" fill="#29211b"/>
<rect x="396.98" y="543.5" width="3" height="5.5" fill="#1c272c"/>
<rect x="401.83" y="526.6" width="3" height="22.4" fill="#29211b"/>
<rect x="406.68" y="522.7" width="3" height="26.3" fill="#1c272c"/>
<rect x="411.53" y="525.0" width="3" height="24.0" fill="#1c272c"/>
<rect x="416.38" y="535.7" width="3" height="13.3" fill="#29211b"/>
<rect x="421.23" y="541.0" width="3" height="8.0" fill="#1c272c"/>
<rect x="435.79" y="539.6" width="3" height="9.4" fill="#29211b"/>
<rect x="440.64" y="517.5" width="3" height="31.5" fill="#162c2c"/>
<rect x="445.49" y="517.5" width="3" height="31.5" fill="#162c2c"/>
<rect x="450.34" y="530.5" width="3" height="18.5" fill="#29211b"/>
<rect x="455.19" y="538.0" width="3" height="11.0" fill="#1c272c"/>
<rect x="469.74" y="545.0" width="3" height="4.0" fill="#1c272c"/>
<rect x="474.59" y="499.0" width="3" height="50.0" fill="#162c2c"/>
<rect x="479.45" y="524.0" width="3" height="25.0" fill="#1c272c"/>
<rect x="489.15" y="546.0" width="3" height="3.0" fill="#1c272c"/>
<rect x="494.00" y="545.0" width="3" height="4.0" fill="#1c272c"/>
<rect x="498.85" y="543.5" width="3" height="5.5" fill="#1c272c"/>
<rect x="503.70" y="517.5" width="3" height="31.5" fill="#29211b"/>
<rect x="508.55" y="531.8" width="3" height="17.2" fill="#1c272c"/>
<rect x="513.40" y="542.0" width="3" height="7.0" fill="#1c272c"/>
<rect x="518.25" y="542.0" width="3" height="7.0" fill="#1c272c"/>
<rect x="523.11" y="541.0" width="3" height="8.0" fill="#29211b"/>
<rect x="527.96" y="545.0" width="3" height="4.0" fill="#1c272c"/>
<rect x="537.66" y="541.0" width="3" height="8.0" fill="#1c272c"/>
<rect x="542.51" y="543.5" width="3" height="5.5" fill="#1c272c"/>
<rect x="4.05" y="252.4" width="3" height="97.8" fill="#8ea6be"/>
<rect x="8.90" y="183.8" width="3" height="166.4" fill="#5eb2a4"/>
<rect x="9.90" y="350.2" width="1" height="29.8" fill="#646464"/>
<rect x="13.75" y="183.8" width="3" height="125.9" fill="#8ea6be"/>
<rect x="18.60" y="183.8" width="3" height="159.8" fill="#c47c4c"/>
<rect x="22.45" y="183.8" width="5" height="166.4" fill="#240202"/>
<rect x="28.30" y="183.8" width="3" height="125.9" fill="#c47c4c"/>
<rect x="29.30" y="309.7" width="1" height="33.9" fill="#8a6048"/>
<rect x="34.15" y="183.8" width="1" height="125.9" fill="#646464"/>
<rect x="33.15" y="309.7" width="3" height="7.3" fill="#a49a5c"/>
<rect x="39.00" y="183.8" width="1" height="98.9" fill="#a4a2c4"/>
<rect x="38.00" y="282.7" width="3" height="34.3" fill="#8ea6be"/>
<rect x="43.86" y="183.8" width="1" height="99.2" fill="#a8a8a8"/>
<rect x="48.71" y="183.8" width="1" height="98.9" fill="#8a6048"/>
<rect x="47.71" y="282.7" width="3" height="34.3" fill="#c47c4c"/>
<rect x="53.56" y="183.8" width="1" height="133.2" fill="#8a6048"/>
<rect x="52.56" y="317.0" width="3" height="33.2" fill="#c47c4c"/>
<rect x="58.41" y="183.8" width="1" height="166.4" fill="#646464"/>
<rect x="63.26" y="185.7" width="1" height="164.5" fill="#646464"/>
<rect x="68.11" y="217.0" width="1" height="33.3" fill="#646464"/>
<rect x="67.11" y="250.3" width="3" height="99.9" fill="#5eb2a4"/>
<rect x="72.96" y="217.0" width="1" height="33.3" fill="#406a40"/>
<rect x="71.96" y="250.3" width="3" height="133.3" fill="#a49a5c"/>
<rect x="76.81" y="217.0" width="3" height="166.6" fill="#a4a2c4"/>
<rect x="81.66" y="217.0" width="3" height="133.2" fill="#8ea6be"/>
<rect x="86.52" y="217.0" width="3" height="133.2" fill="#a49a5c"/>
<rect x="90.37" y="217.0" width="5" height="133.2" fill="#240202"/>
<rect x="91.37" y="217.0" width="3" height="133.2" fill="#d85a44"/>
<rect x="96.22" y="217.0" width="3" height="133.2" fill="#7a2c50"/>
<rect x="102.07" y="183.8" width="1" height="33.2" fill="#8a6048"/>
<rect x="101.07" y="217.0" width="3" height="133.2" fill="#c47c4c"/>
<rect x="106.92" y="217.0" width="1" height="133.2" fill="#646464"/>
<rect x="116.62" y="250.3" width="1" height="93.3" fill="#646464"/>
<rect x="119.47" y="250.3" width="5" height="66.7" fill="#240202"/>
<rect x="125.32" y="250.3" width="3" height="85.7" fill="#c47c4c"/>
<rect x="131.17" y="250.3" width="1" height="85.7" fill="#646464"/>
<rect x="130.17" y="336.0" width="3" height="5.0" fill="#a49a5c"/>
<rect x="136.03" y="250.3" width="1" height="66.7" fill="#406a40"/>
<rect x="139.88" y="250.3" width="3" height="89.7" fill="#5eb2a4"/>
<rect x="145.73" y="217.0" width="1" height="100.0" fill="#646464"/>
<rect x="144.73" y="317.0" width="3" height="23.0" fill="#8ea6be"/>
<rect x="149.58" y="183.8" width="3" height="33.2" fill="#8ea6be"/>
<rect x="150.58" y="217.0" width="1" height="100.0" fill="#646464"/>
<rect x="155.43" y="183.8" width="1" height="-183.3" fill="#a8a8a8"/>
<rect x="158.28" y="183.8" width="5" height="166.4" fill="#240202"/>
<rect x="165.13" y="183.8" width="1" height="133.2" fill="#8a6048"/>
<rect x="164.13" y="317.0" width="3" height="23.0" fill="#c47c4c"/>
<rect x="168.98" y="183.8" width="3" height="66.5" fill="#5eb2a4"/>
<rect x="169.98" y="250.3" width="1" height="66.7" fill="#646464"/>
<rect x="178.68" y="217.0" width="3" height="100.0" fill="#5eb2a4"/>
<rect x="193.24" y="264.0" width="3" height="53.0" fill="#8ea6be"/>
<rect x="199.09" y="264.0" width="1" height="53.0" fill="#406a40"/>
<rect x="198.09" y="317.0" width="3" height="23.0" fill="#a49a5c"/>
<rect x="202.94" y="264.0" width="3" height="76.0" fill="#5eb2a4"/>
<rect x="206.79" y="264.0" width="5" height="119.6" fill="#240202"/>
<rect x="207.79" y="264.0" width="3" height="119.6" fill="#c47c4c"/>
<rect x="211.64" y="264.0" width="5" height="119.6" fill="#240202"/>
<rect x="213.64" y="264.0" width="1" height="119.6" fill="#b86a9c"/>
<rect x="212.64" y="383.6" width="3" height="56.4" fill="#c47c4c"/>
<rect x="218.49" y="267.0" width="1" height="116.6" fill="#646464"/>
<rect x="217.49" y="383.6" width="3" height="56.4" fill="#8ea6be"/>
<rect x="222.34" y="267.0" width="3" height="3.5" fill="#a8a8a8"/>
<rect x="228.19" y="267.0" width="1" height="1.0" fill="#a8a8a8"/>
<rect x="232.04" y="250.3" width="3" height="69.7" fill="#8ea6be"/>
<rect x="232.04" y="320.0" width="3" height="30.2" fill="#b86a9c"/>
<rect x="232.04" y="350.2" width="3" height="33.4" fill="#8ea6be"/>
<rect x="237.90" y="250.3" width="1" height="66.7" fill="#406a40"/>
<rect x="236.90" y="317.0" width="3" height="33.2" fill="#a49a5c"/>
<rect x="242.75" y="250.3" width="1" height="66.7" fill="#646464"/>
<rect x="247.60" y="217.0" width="1" height="33.3" fill="#646464"/>
<rect x="251.45" y="217.0" width="3" height="33.3" fill="#5eb2a4"/>
<rect x="255.30" y="250.3" width="5" height="66.7" fill="#240202"/>
<rect x="256.30" y="250.3" width="3" height="66.7" fill="#c47c4c"/>
<rect x="260.15" y="250.3" width="5" height="66.7" fill="#240202"/>
<rect x="266.00" y="250.3" width="3" height="66.7" fill="#8ea6be"/>
<rect x="271.85" y="250.3" width="1" height="66.7" fill="#406a40"/>
<rect x="275.70" y="250.3" width="3" height="66.7" fill="#8ea6be"/>
<rect x="281.56" y="250.3" width="1" height="66.7" fill="#646464"/>
<rect x="280.56" y="317.0" width="3" height="33.2" fill="#a49a5c"/>
<rect x="285.41" y="250.3" width="3" height="69.7" fill="#a4a2c4"/>
<rect x="285.41" y="320.0" width="3" height="30.2" fill="#b86a9c"/>
<rect x="290.26" y="250.3" width="3" height="99.9" fill="#c47c4c"/>
<rect x="305.81" y="250.3" width="1" height="99.9" fill="#a4a2c4"/>
<rect x="309.66" y="284.0" width="3" height="66.2" fill="#a49a5c"/>
<rect x="314.51" y="286.0" width="3" height="64.2" fill="#d85a44"/>
<rect x="315.51" y="350.2" width="1" height="33.4" fill="#8a6048"/>
<rect x="329.06" y="350.2" width="3" height="33.4" fill="#5eb2a4"/>
<rect x="333.92" y="317.0" width="3" height="66.6" fill="#8ea6be"/>
<rect x="338.77" y="350.2" width="3" height="33.4" fill="#c47c4c"/>
<rect x="339.77" y="383.6" width="1" height="56.4" fill="#8a6048"/>
<rect x="343.62" y="439.7" width="3" height="9.9" fill="#a49a5c"/>
<rect x="349.47" y="350.2" width="1" height="99.4" fill="#646464"/>
<rect x="353.32" y="350.2" width="3" height="99.4" fill="#5eb2a4"/>
<rect x="358.17" y="383.6" width="3" height="66.0" fill="#5eb2a4"/>
<rect x="367.87" y="383.6" width="3" height="66.0" fill="#5eb2a4"/>
<rect x="372.72" y="383.6" width="3" height="66.0" fill="#5eb2a4"/>
<rect x="377.57" y="383.6" width="3" height="66.0" fill="#5eb2a4"/>
<rect x="378.57" y="449.6" width="1" height="33.0" fill="#646464"/>
<rect x="382.43" y="317.0" width="3" height="165.6" fill="#8ea6be"/>
<rect x="388.28" y="350.2" width="1" height="132.4" fill="#406a40"/>
<rect x="386.28" y="482.6" width="5" height="33.4" fill="#240202"/>
<rect x="387.28" y="482.6" width="3" height="33.4" fill="#c47c4c"/>
<rect x="393.13" y="350.2" width="1" height="0.8" fill="#a8a8a8"/>
<rect x="401.83" y="350.2" width="3" height="165.8" fill="#5eb2a4"/>
<rect x="412.53" y="350.2" width="1" height="132.4" fill="#646464"/>
<rect x="417.38" y="350.2" width="1" height="132.4" fill="#646464"/>
<rect x="416.38" y="482.6" width="3" height="33.4" fill="#a49a5c"/>
<rect x="422.23" y="317.0" width="1" height="165.6" fill="#646464"/>
<rect x="421.23" y="482.6" width="3" height="33.4" fill="#b86a9c"/>
<rect x="426.08" y="383.6" width="3" height="99.0" fill="#5eb2a4"/>
<rect x="434.79" y="482.6" width="5" height="33.4" fill="#240202"/>
<rect x="435.79" y="482.6" width="3" height="33.4" fill="#c47c4c"/>
<rect x="440.64" y="383.6" width="3" height="132.4" fill="#5eb2a4"/>
<rect x="450.34" y="383.6" width="3" height="99.0" fill="#5eb2a4"/>
<rect x="455.19" y="383.6" width="3" height="99.0" fill="#5eb2a4"/>
<rect x="463.89" y="383.6" width="5" height="99.0" fill="#240202"/>
<rect x="465.89" y="383.6" width="1" height="1.4" fill="#a8a8a8"/>
<rect x="470.74" y="383.6" width="1" height="99.0" fill="#406a40"/>
<rect x="475.59" y="383.6" width="1" height="65.4" fill="#646464"/>
<rect x="474.59" y="449.0" width="3" height="33.6" fill="#5eb2a4"/>
<rect x="480.45" y="317.0" width="1" height="93.0" fill="#646464"/>
<rect x="479.45" y="410.0" width="3" height="39.6" fill="#8ea6be"/>
<rect x="485.30" y="317.0" width="1" height="1.5" fill="#a8a8a8"/>
<rect x="489.15" y="317.0" width="3" height="99.0" fill="#8ea6be"/>
<rect x="494.00" y="317.0" width="3" height="95.7" fill="#a49a5c"/>
<rect x="497.85" y="317.0" width="5" height="95.0" fill="#240202"/>
<rect x="504.70" y="317.0" width="1" height="94.5" fill="#8a6048"/>
<rect x="503.70" y="411.5" width="3" height="38.1" fill="#c47c4c"/>
<rect x="509.55" y="350.2" width="1" height="65.8" fill="#646464"/>
<rect x="508.55" y="416.0" width="3" height="33.6" fill="#b86a9c"/>
<rect x="513.40" y="317.0" width="3" height="99.0" fill="#8ea6be"/>
<rect x="518.25" y="317.0" width="3" height="63.0" fill="#a49a5c"/>
<rect x="522.11" y="317.0" width="5" height="66.6" fill="#240202"/>
<rect x="523.11" y="352.0" width="3" height="31.6" fill="#d85a44"/>
<rect x="527.96" y="317.0" width="3" height="66.6" fill="#5eb2a4"/>
<rect x="532.81" y="317.0" width="3" height="66.6" fill="#5eb2a4"/>
<rect x="537.66" y="317.0" width="3" height="65.0" fill="#5eb2a4"/>
<rect x="542.51" y="285.8" width="3" height="31.2" fill="#8ea6be"/>
<rect x="296" y="349" width="87" height="2" fill="#00ff80" fill-opacity="0.16"/>
<rect x="283" y="399" width="100" height="4" fill="#00ff80" fill-opacity="0.14"/>
<rect x="211.5" y="566.5" width="37" height="28" fill="none" stroke="#062a0c" stroke-width="2"/>
<rect x="212" y="559" width="36" height="7" fill="#160303"/>
<rect x="212" y="598" width="36" height="8" fill="#160303"/>
<line x1="311" y1="285.5" x2="596" y2="285.5" stroke="#5a5a5a" stroke-width="1" stroke-dasharray="2 2"/>
</svg>

<!-- toolbar -->
<svg class="a" style="left:0;top:110px" width="160" height="30">
 <polyline points="6,14.5 9,17.3 12,14.5" fill="none" stroke="#8a8a8a" stroke-width="1.2"/>
 <path d="M36,10.8 C35,9.2 32.3,9.2 32,11.5 L32,20.5 C31.8,22.8 29.5,23 28.5,21.5 M29.5,14.2 H36" fill="none" stroke="#9a9a9a" stroke-width="1.2"/>
 <path d="M34.2,19.2 L38,22.8 M38,19.2 L34.2,22.8" fill="none" stroke="#9a9a9a" stroke-width="1"/>
 <path d="M121,15.5 h6 a4,4 0 0 1 4,4 v1" fill="none" stroke="#8a8a8a" stroke-width="1.3"/>
 <polyline points="124,12.5 121,15.5 124,18.5" fill="none" stroke="#8a8a8a" stroke-width="1.3"/>
 <path d="M155,15.5 h-6 a4,4 0 0 0 -4,4 v1" fill="none" stroke="#3a3a3a" stroke-width="1.3"/>
 <polyline points="152,12.5 155,15.5 152,18.5" fill="none" stroke="#3a3a3a" stroke-width="1.3"/>
</svg>
<div class="a" style="left:46px;top:119px;font-size:11.5px;color:#b4b4b4;line-height:16px">Indicadores</div>
<svg class="a" style="left:540px;top:110px" width="100" height="34">
 <g transform="translate(17.5,16.7)" fill="none" stroke="#9a9a9a" stroke-width="1.1">
  <circle r="2.6"/>
  <path d="M-1.6,-8 h3.2 l0.6,2.2 l2,1.1 l2.2,-0.6 l1.6,2.8 l-1.6,1.6 v2.2 l1.6,1.6 l-1.6,2.8 l-2.2,-0.6 l-2,1.1 l-0.6,2.2 h-3.2 l-0.6,-2.2 l-2,-1.1 l-2.2,0.6 l-1.6,-2.8 l1.6,-1.6 v-2.2 l-1.6,-1.6 l1.6,-2.8 l2.2,0.6 l2,-1.1 z"/>
 </g>
 <g transform="translate(49.4,16.7)" fill="none" stroke="#9a9a9a" stroke-width="1.1">
  <path d="M-6.5,-3 v-3.5 h3.5 M-6.5,-6.5 l4.5,4.5 M6.5,-3 v-3.5 h-3.5 M6.5,-6.5 l-4.5,4.5 M-6.5,3 v3.5 h3.5 M-6.5,6.5 l4.5,-4.5 M6.5,3 v3.5 h-3.5 M6.5,6.5 l-4.5,-4.5"/>
 </g>
 <g transform="translate(80.4,16.3)" fill="none" stroke="#9a9a9a" stroke-width="1.1">
  <path d="M-8.5,-4 h4 l1.5,-2.6 h6 l1.5,2.6 h4 v10.5 h-17 z"/>
  <circle cx="0" cy="1" r="3.3"/>
 </g>
</svg>

<!-- legend -->
<div class="a" style="left:0;top:145px;width:496px;height:18px;background:#010101"></div>
<div class="a" style="left:-3px;top:147px;font-size:14px;color:#c8c8c8;line-height:17px;transform:scaleX(0.81);transform-origin:0 0">E:USDT-DOP · 1D · BITCOINRD EXCHANGE</div>
<svg class="a" style="left:242px;top:149px" width="14" height="14"><circle cx="7" cy="6.7" r="5" fill="#1c3a3a"/><circle cx="7" cy="6.7" r="2.8" fill="#a8c4cc"/></svg>
<div class="a" style="left:269px;top:152px;font-size:10.7px;color:#c4c4c4;line-height:13px">O59.00 H59.47 L59.00 C59.47 +1.46 (+2.52%)</div>

<!-- price axis -->
<div class="a" style="left:596px;top:144px;width:1px;height:428px;background:#262626"></div>
<div class="a pl" style="top:145px">61.50</div>
<div class="a pl" style="top:178px">61.00</div>
<div class="a pl" style="top:211px">60.50</div>
<div class="a pl" style="top:244px">60.00</div>
<div class="a pl" style="top:311px">59.00</div>
<div class="a pl" style="top:344px">58.50</div>
<div class="a pl" style="top:377px">58.00</div>
<div class="a pl" style="top:410px">57.50</div>
<div class="a pl" style="top:444px">57.00</div>
<div class="a pl" style="top:477px">56.50</div>
<div class="a pl" style="top:510px">56.00</div>
<div class="a" style="left:597px;top:272px;width:35px;height:31px;background:#021006"></div>
<div class="a" style="left:596px;top:279px;width:36px;height:13px;background:#6496a0"></div>
<div class="a pl" style="top:280px;color:#f0f0f0">59.47</div>

<!-- time axis -->
<div class="a" style="left:0;top:549px;width:636px;height:1px;background:#262626"></div>
<div class="a tl" style="left:6px">Mar</div>
<div class="a tl" style="left:77px">15</div>
<div class="a tl" style="left:157px">Abr</div>
<div class="a tl" style="left:228px">15</div>
<div class="a tl" style="left:299px">Mayo</div>
<div class="a tl" style="left:373px">15</div>
<div class="a tl" style="left:452px">Jun</div>
<div class="a tl" style="left:524px">15</div>
<svg class="a" style="left:605px;top:551px" width="20" height="20">
 <g transform="translate(10,10)" fill="none" stroke="#8a8a8a" stroke-width="1.1">
  <circle r="3.6"/>
  <path d="M0,-6 v1.6 M0,6 v-1.6 M-6,0 h1.6 M6,0 h-1.6 M-4.2,-4.2 l1.1,1.1 M4.2,4.2 l-1.1,-1.1 M-4.2,4.2 l1.1,-1.1 M4.2,-4.2 l-1.1,1.1"/>
 </g>
</svg>
<div class="a" style="left:0;top:571px;width:636px;height:1px;background:#262626"></div>

<!-- bottom toolbar -->
<div class="a" style="left:9px;top:581px;font-size:12px;color:#c8b4c4;line-height:14px">5d</div>
<div class="a" style="left:33px;top:581px;font-size:12px;color:#b4d4d4;line-height:14px">1d</div>
<div class="a" style="left:58px;top:579px;width:1px;height:18px;background:#333"></div>
<svg class="a" style="left:70px;top:580px" width="18" height="16"><path d="M2.5,3.5 h12 v9 h-12 z M2.5,6.5 h12 M5.5,1.5 v3 M11.5,1.5 v3" fill="none" stroke="#a890a8" stroke-width="1.1"/></svg>
<div class="a" style="left:441px;top:581px;font-size:11px;color:#b0b0b0;line-height:14px">18:52:15 (UTC+2)</div>
<div class="a" style="left:542px;top:579px;width:1px;height:18px;background:#333"></div>
<div class="a" style="left:556px;top:581px;font-size:12px;color:#b0b0b0;line-height:14px">%</div>
<div class="a" style="left:578px;top:581px;font-size:12px;color:#b0b0b0;line-height:14px">log</div>
<div class="a" style="left:604px;top:581px;font-size:12px;color:#6060f0;line-height:14px">auto</div>
<svg class="a" style="left:639px;top:605px" width="8" height="8"><path d="M6,1 v5 h-5" fill="none" stroke="#aaa" stroke-width="1"/></svg>

<!-- right panel -->
<div class="a" style="left:657px;top:76px;width:112px;height:545px;border-left:1px solid #262626;border-top:1px solid #262626;background:#000"></div>
<div class="a" style="left:658px;top:77px;width:110px;height:23px;background:#090909"></div>
<svg class="a" style="left:668px;top:81px" width="17" height="17"><circle cx="8.2" cy="8.6" r="6.7" fill="#6aa696"/><path d="M4.8,5.6 h6.8 M8.2,5.6 v7" stroke="#f4f4f4" stroke-width="1.9"/></svg>
<div class="a" style="left:686px;top:82px;font-size:10.5px;font-weight:bold;color:#ecece4;line-height:14px;letter-spacing:-0.2px">ORDEN DE ENTRADA</div>
<div class="a rp" style="left:669px;top:113px;font-size:11.6px;line-height:14px">Modo de pedido:</div>
<div class="a" style="left:669px;top:145px;width:100px;height:1.5px;background:#e8e8e8"></div>
<div class="a" style="left:672px;top:160px;width:96px;height:48px;background:#020a05"></div>
<div class="a rp" style="left:718px;top:150px;font-size:9.6px;color:#c0c0c0">MARKET</div>
<div class="a" style="left:669px;top:171px;width:100px;height:24px;background:#3aa596;border:3px solid #74889a;border-left-width:2px;border-right:none"></div>
<div class="a" style="left:727px;top:176px;font-size:10px;font-weight:bold;color:#dcfff6;line-height:14px">BUY</div>
<div class="a rp" style="left:669px;top:217px">Límite</div>
<div class="a" style="left:669px;top:233px;width:100px;height:25px;background:#141414;border:1px solid #3a3a3a;border-right:none;border-radius:2px 0 0 2px"></div>
<div class="a rp" style="left:673px;top:240px;font-weight:bold;color:#eee">58.1</div>
<div class="a rp" style="left:669px;top:264px">Monto</div>
<div class="a" style="left:669px;top:279px;width:100px;height:25px;background:#0e0e0e;border:1px solid #44446a;border-right:none;border-radius:2px 0 0 2px"></div>
<div class="a" style="left:672px;top:286px;width:1px;height:13px;background:#ccc"></div>
<div class="a rp" style="left:673px;top:286px;color:#4c4c4c">0.00</div>
<div class="a" style="left:677px;top:315.5px;width:91px;height:3px;background:#cfcfc8"></div>
<div class="a" style="left:671px;top:311px;width:12px;height:12px;border-radius:50%;background:#4a5cd0"></div>
<div class="a" style="left:736.5px;top:313px;width:7px;height:7px;border-radius:50%;background:#b8b8b8;border:1.5px solid #dcdcdc"></div>
<div class="a rp" style="left:728px;top:324px;font-size:9px;color:#c8c8c8">25%</div>
<div class="a" style="left:669px;top:358px;width:100px;height:1px;background:#333"></div>
<div class="a rp" style="left:669px;top:360px;letter-spacing:-0.3px">Precio de la orden:</div>
<div class="a rp" style="left:669px;top:374px">Tarifas:</div>
<div class="a" style="left:669px;top:408px;width:100px;height:23px;background:#585858;border-radius:2px 0 0 2px"></div>
<div class="a" style="left:746px;top:413px;font-size:11px;font-weight:bold;color:#dcdcdc;line-height:14px">COMPRAR</div>
</body></html>
